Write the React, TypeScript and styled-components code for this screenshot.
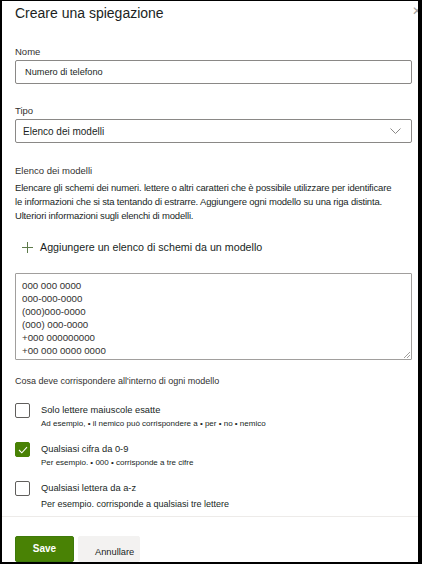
import React from "react";
import styled, { createGlobalStyle } from "styled-components";

const Global = createGlobalStyle`
  html, body { margin: 0; padding: 0; background: #fff; }
  body { font-family: "Liberation Sans", Arial, sans-serif; color: #201f1e; }
  * { box-sizing: border-box; }
`;

const Frame = styled.div`
  position: relative;
  width: 422px;
  height: 564px;
  overflow: hidden;
  background: #fff;
  border-style: solid;
  border-color: #000;
  border-width: 1px 4px 2px 2px;
`;

const Panel = styled.div`
  display: flex;
  flex-direction: column;
  padding: 0 4px 0 13px;
`;

const Title = styled.h1`
  margin: 1px 0 0;
  font-size: 14px;
  line-height: 22px;
  font-weight: 400;
  color: #201f1e;
`;

const Close = styled.span`
  position: absolute;
  top: 3px;
  right: -4px;
  font-size: 12px;
  color: #a19f9d;
`;

const Label = styled.div<{ $top: number; $size?: number }>`
  margin-top: ${(p) => p.$top}px;
  font-size: ${(p) => p.$size ?? 9.5}px;
  line-height: 16px;
  color: #323130;
`;

const Field = styled.div<{ $h: number; $top: number }>`
  margin-top: ${(p) => p.$top}px;
  height: ${(p) => p.$h}px;
  width: 397px;
  border: 1px solid #8a8886;
  border-radius: 2px;
  display: flex;
  align-items: center;
  justify-content: space-between;
  padding: 0 10px 0 9px;
  font-size: 9.2px;
  color: #201f1e;
`;

const SelectText = styled.span`
  font-size: 10px;
  margin-left: -2px;
`;

const Para = styled.p`
  margin: 2px 0 0;
  font-size: 9.5px;
  letter-spacing: -0.18px;
  line-height: 14px;
  color: #201f1e;
  white-space: nowrap;
`;

const AddLink = styled.div`
  margin-top: 16px;
  margin-left: 7px;
  display: flex;
  align-items: center;
  gap: 7px;
  height: 16px;
  font-size: 10.7px;
  color: #201f1e;
`;

const TextArea = styled.div`
  position: relative;
  margin-top: 18px;
  width: 397px;
  height: 87px;
  border: 1px solid #a19f9d;
  border-radius: 1px;
  padding: 5px 6px;
  font-size: 9.7px;
  line-height: 13px;
  color: #323130;
`;

const Grip = styled.svg`
  position: absolute;
  right: 1px;
  bottom: 1px;
`;

const Options = styled.div`
  margin-top: 15px;
  display: flex;
  flex-direction: column;
  gap: 9px;
`;

const Option = styled.div`
  display: flex;
  gap: 11px;
  align-items: flex-start;
  height: 30px;
`;

const Box = styled.div<{ $checked?: boolean }>`
  margin-top: -1px;
  width: 15px;
  height: 15px;
  flex: none;
  border-radius: 2px;
  border: 1px solid ${(p) => (p.$checked ? "#498205" : "#605e5c")};
  background: ${(p) => (p.$checked ? "#498205" : "#fff")};
  display: flex;
  align-items: center;
  justify-content: center;
`;

const OptText = styled.div`
  display: flex;
  flex-direction: column;
`;

const OptTitle = styled.span`
  font-size: 9.3px;
  line-height: 13px;
  color: #201f1e;
`;

const OptSub = styled.span<{ $large?: boolean }>`
  margin-top: ${(p) => (p.$large ? "2px" : "0")};
  font-size: ${(p) => (p.$large ? "9px" : "8px")};
  line-height: 14px;
  color: #201f1e;
`;

const Divider = styled.div`
  margin: 4px -4px 0 -13px;
  height: 1px;
  background: #edebe9;
`;

const Buttons = styled.div`
  margin-top: 19px;
  display: flex;
  gap: 4px;
`;

const Button = styled.button<{ $primary?: boolean }>`
  width: ${(p) => (p.$primary ? "59px" : "62px")};
  height: 26px;
  border: 1px solid ${(p) => (p.$primary ? "#3e7a0a" : "#f3f2f1")};
  border-radius: 2px;
  background: ${(p) => (p.$primary ? "#498205" : "#f3f2f1")};
  color: ${(p) => (p.$primary ? "#fff" : "#201f1e")};
  font-family: inherit;
  font-size: ${(p) => (p.$primary ? "10px" : "9.3px")};
  font-weight: ${(p) => (p.$primary ? 700 : 400)};
  padding: ${(p) => (p.$primary ? "0 0 2px" : "5px 0 0 16px")};
  text-align: ${(p) => (p.$primary ? "center" : "left")};
`;

const patterns = [
  "000 000 0000",
  "000-000-0000",
  "(000)000-0000",
  "(000) 000-0000",
  "+000 000000000",
  "+00 000 0000 0000",
];

const options = [
  {
    title: "Solo lettere maiuscole esatte",
    sub: "Ad esempio, • il nemico può corrispondere a • per • no • nemico",
    checked: false,
    large: false,
  },
  {
    title: "Qualsiasi cifra da 0-9",
    sub: "Per esempio. • 000 • corrisponde a tre cifre",
    checked: true,
    large: false,
  },
  {
    title: "Qualsiasi lettera da a-z",
    sub: "Per esempio. corrisponde a qualsiasi tre lettere",
    checked: false,
    large: true,
  },
];

export default function App() {
  return (
    <>
      <Global />
      <Frame>
        <Close>✕</Close>
        <Panel>
          <Title>Creare una spiegazione</Title>
          <Label $top={20}>Nome</Label>
          <Field $h={24} $top={0}>Numero di telefono</Field>
          <Label $top={19}>Tipo</Label>
          <Field $h={24} $top={0}>
            <SelectText>Elenco dei modelli</SelectText>
            <svg width="11" height="7" viewBox="0 0 11 7">
              <path d="M0.5 0.5 L5.5 5.5 L10.5 0.5" fill="none" stroke="#8a8886" strokeWidth="1" />
            </svg>
          </Field>
          <Label $top={20}>Elenco dei modelli</Label>
          <Para>
            Elencare gli schemi dei numeri. lettere o altri caratteri che è possibile utilizzare per identificare
            <br />
            le informazioni che si sta tentando di estrarre. Aggiungere ogni modello su una riga distinta.
            <br />
            Ulteriori informazioni sugli elenchi di modelli.
          </Para>
          <AddLink>
            <svg width="11" height="11" viewBox="0 0 11 11">
              <path d="M5.5 0 V11 M0 5.5 H11" stroke="#5d7a4a" strokeWidth="1" />
            </svg>
            Aggiungere un elenco di schemi da un modello
          </AddLink>
          <TextArea>
            {patterns.map((p) => (
              <div key={p}>{p}</div>
            ))}
            <Grip width="7" height="7" viewBox="0 0 7 7">
              <path d="M7 1 L1 7 M7 4 L4 7" stroke="#a19f9d" strokeWidth="1" />
            </Grip>
          </TextArea>
          <Label $top={13} $size={9}>Cosa deve corrispondere all'interno di ogni modello</Label>
          <Options>
            {options.map((o) => (
              <Option key={o.title}>
                <Box $checked={o.checked}>
                  {o.checked && (
                    <svg width="10" height="8" viewBox="0 0 10 8">
                      <path d="M1 4 L3.8 6.8 L9 1.2" fill="none" stroke="#fff" strokeWidth="1.1" />
                    </svg>
                  )}
                </Box>
                <OptText>
                  <OptTitle>{o.title}</OptTitle>
                  <OptSub $large={o.large}>{o.sub}</OptSub>
                </OptText>
              </Option>
            ))}
          </Options>
          <Divider />
          <Buttons>
            <Button $primary>Save</Button>
            <Button>Annullare</Button>
          </Buttons>
        </Panel>
      </Frame>
    </>
  );
}
